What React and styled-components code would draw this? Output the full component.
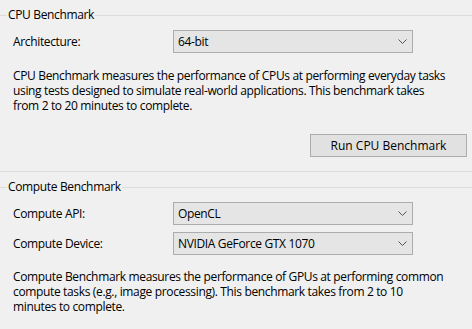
import React from 'react';
import styled, { createGlobalStyle } from 'styled-components';

const GlobalStyle = createGlobalStyle`
  html, body {
    margin: 0;
    padding: 0;
    background: #f0f0f0;
  }
  body {
    font-family: "Open Sans", "Noto Sans", "Liberation Sans", sans-serif;
    font-size: 12px;
    letter-spacing: -0.35px;
    color: #000;
  }
`;

const Page = styled.div`
  width: 472px;
  height: 329px;
  overflow: hidden;
  padding-top: 7px;
  box-sizing: border-box;
`;

const Group = styled.section`
  border-bottom: ${(p) => (p.closed ? '1px solid #dcdcdc' : 'none')};
  padding-bottom: ${(p) => (p.closed ? '14px' : '0')};
  margin-bottom: 7px;
`;

const Legend = styled.div`
  display: flex;
  align-items: center;
  height: 16px;
  line-height: 16px;
  white-space: nowrap;

  &::before,
  &::after {
    content: '';
    height: 1px;
    background: #dcdcdc;
  }
  &::before {
    width: 7px;
  }
  &::after {
    flex: 1;
  }
`;

const LegendText = styled.span`
  padding: 0 1px 0 1px;
`;

const Content = styled.div`
  padding: 0 5px 0 13px;
  display: flex;
  flex-direction: column;
`;

const Row = styled.div`
  display: flex;
  align-items: center;
  margin-top: 7px;
`;

const Label = styled.span`
  width: 160px;
`;

const Select = styled.div`
  width: 240px;
  height: 23px;
  box-sizing: border-box;
  border: 1px solid #adadad;
  background: #e5e5e5;
  display: flex;
  align-items: center;
  justify-content: space-between;
  padding: 0 5px 0 4px;
`;

const Chevron = () => (
  <svg width="9" height="5" viewBox="0 0 9 5">
    <polyline points="0.5,0.5 4.5,4.5 8.5,0.5" fill="none" stroke="#555" strokeWidth="1" />
  </svg>
);

const Text = styled.p`
  margin: ${(p) => p.gap}px 0 0 0;
  line-height: 15px;
  white-space: nowrap;
`;

const Actions = styled.div`
  display: flex;
  justify-content: flex-end;
  margin-top: 21px;
`;

const Button = styled.button`
  width: 157px;
  height: 23px;
  border: 1px solid #adadad;
  background: #e1e1e1;
  font: inherit;
  color: #000;
  padding: 0;
`;

const Dropdown = ({ value }) => (
  <Select>
    <span>{value}</span>
    <Chevron />
  </Select>
);

export default function App() {
  return (
    <Page>
      <GlobalStyle />
      <Group closed>
        <Legend>
          <LegendText>CPU Benchmark</LegendText>
        </Legend>
        <Content>
          <Row>
            <Label>Architecture:</Label>
            <Dropdown value="64-bit" />
          </Row>
          <Text gap={15}>
            CPU Benchmark measures the performance of CPUs at performing everyday tasks
            <br />
            using tests designed to simulate real-world applications. This benchmark takes
            <br />
            from 2 to 20 minutes to complete.
          </Text>
          <Actions>
            <Button>Run CPU Benchmark</Button>
          </Actions>
        </Content>
      </Group>
      <Group>
        <Legend>
          <LegendText>Compute Benchmark</LegendText>
        </Legend>
        <Content>
          <Row>
            <Label>Compute API:</Label>
            <Dropdown value="OpenCL" />
          </Row>
          <Row>
            <Label>Compute Device:</Label>
            <Dropdown value="NVIDIA GeForce GTX 1070" />
          </Row>
          <Text gap={14}>
            Compute Benchmark measures the performance of GPUs at performing common
            <br />
            compute tasks (e.g., image processing). This benchmark takes from 2 to 10
            <br />
            minutes to complete.
          </Text>
        </Content>
      </Group>
    </Page>
  );
}
